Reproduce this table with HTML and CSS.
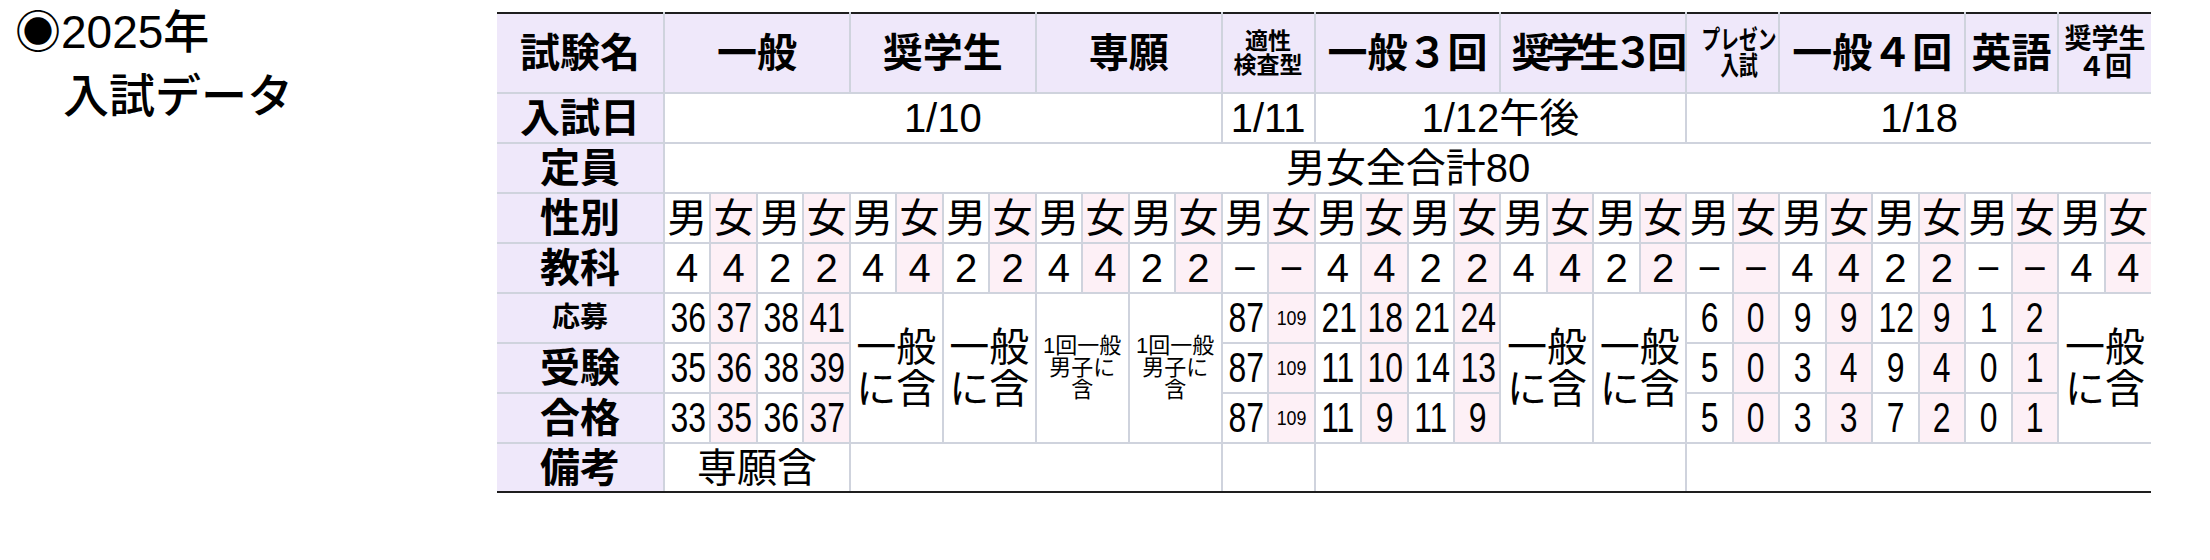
FILE: index.html
```html
<!DOCTYPE html>
<html lang="ja">
<head>
<meta charset="utf-8">
<title>2025年 入試データ</title>
<link rel="stylesheet" href="styles.css">
</head>
<body>
<div class="page">
  <div class="title">
    <div>◉2025年</div>
    <div class="line2">入試データ</div>
  </div>
  <table class="exam">
    <colgroup>
      <col class="c-label">
      <col><col><col><col><col><col><col><col>
      <col><col><col><col><col><col><col><col>
      <col><col><col><col><col><col><col><col>
      <col><col><col><col><col><col><col><col>
    </colgroup>
    <tr class="r-head">
      <th class="lbl">試験名</th>
      <th colspan="4">一般</th>
      <th colspan="4">奨学生</th>
      <th colspan="4">専願</th>
      <th colspan="2" class="h-sm">適性<br>検査型</th>
      <th colspan="4">一般３回</th>
      <th colspan="4" class="h-tight">奨学生３回</th>
      <th colspan="2" class="h-pres"><span class="cond">プレゼン<br>入試</span></th>
      <th colspan="4">一般４回</th>
      <th colspan="2">英語</th>
      <th colspan="2" class="h-mid">奨学生<br>４回</th>
    </tr>
    <tr>
      <th class="lbl">入試日</th>
      <td colspan="12">1/10</td>
      <td colspan="2">1/11</td>
      <td colspan="8">1/12午後</td>
      <td colspan="10">1/18</td>
    </tr>
    <tr>
      <th class="lbl">定員</th>
      <td colspan="32">男女全合計80</td>
    </tr>
    <tr>
      <th class="lbl">性別</th>
      <td>男</td><td class="f">女</td><td>男</td><td class="f">女</td>
      <td>男</td><td class="f">女</td><td>男</td><td class="f">女</td>
      <td>男</td><td class="f">女</td><td>男</td><td class="f">女</td>
      <td>男</td><td class="f">女</td>
      <td>男</td><td class="f">女</td><td>男</td><td class="f">女</td>
      <td>男</td><td class="f">女</td><td>男</td><td class="f">女</td>
      <td>男</td><td class="f">女</td>
      <td>男</td><td class="f">女</td><td>男</td><td class="f">女</td>
      <td>男</td><td class="f">女</td>
      <td>男</td><td class="f">女</td>
    </tr>
    <tr>
      <th class="lbl">教科</th>
      <td>4</td><td class="f">4</td><td>2</td><td class="f">2</td>
      <td>4</td><td class="f">4</td><td>2</td><td class="f">2</td>
      <td>4</td><td class="f">4</td><td>2</td><td class="f">2</td>
      <td>−</td><td class="f">−</td>
      <td>4</td><td class="f">4</td><td>2</td><td class="f">2</td>
      <td>4</td><td class="f">4</td><td>2</td><td class="f">2</td>
      <td>−</td><td class="f">−</td>
      <td>4</td><td class="f">4</td><td>2</td><td class="f">2</td>
      <td>−</td><td class="f">−</td>
      <td>4</td><td class="f">4</td>
    </tr>
    <tr class="r-num">
      <th class="lbl l-sm">応募</th>
      <td><span class="n">36</span></td><td class="f"><span class="n">37</span></td><td><span class="n">38</span></td><td class="f"><span class="n">41</span></td>
      <td colspan="2" rowspan="3" class="incl">一般<br>に含</td>
      <td colspan="2" rowspan="3" class="incl">一般<br>に含</td>
      <td colspan="2" rowspan="3" class="note">1回一般<br>男子に<br>含</td>
      <td colspan="2" rowspan="3" class="note">1回一般<br>男子に<br>含</td>
      <td><span class="n">87</span></td><td class="f n-sm"><span class="n">109</span></td>
      <td><span class="n">21</span></td><td class="f"><span class="n">18</span></td><td><span class="n">21</span></td><td class="f"><span class="n">24</span></td>
      <td colspan="2" rowspan="3" class="incl">一般<br>に含</td>
      <td colspan="2" rowspan="3" class="incl">一般<br>に含</td>
      <td><span class="n">6</span></td><td class="f"><span class="n">0</span></td>
      <td><span class="n">9</span></td><td class="f"><span class="n">9</span></td><td><span class="n">12</span></td><td class="f"><span class="n">9</span></td>
      <td><span class="n">1</span></td><td class="f"><span class="n">2</span></td>
      <td colspan="2" rowspan="3" class="incl">一般<br>に含</td>
    </tr>
    <tr class="r-num">
      <th class="lbl">受験</th>
      <td><span class="n">35</span></td><td class="f"><span class="n">36</span></td><td><span class="n">38</span></td><td class="f"><span class="n">39</span></td>
      <td><span class="n">87</span></td><td class="f n-sm"><span class="n">109</span></td>
      <td><span class="n">11</span></td><td class="f"><span class="n">10</span></td><td><span class="n">14</span></td><td class="f"><span class="n">13</span></td>
      <td><span class="n">5</span></td><td class="f"><span class="n">0</span></td>
      <td><span class="n">3</span></td><td class="f"><span class="n">4</span></td><td><span class="n">9</span></td><td class="f"><span class="n">4</span></td>
      <td><span class="n">0</span></td><td class="f"><span class="n">1</span></td>
    </tr>
    <tr class="r-num">
      <th class="lbl">合格</th>
      <td><span class="n">33</span></td><td class="f"><span class="n">35</span></td><td><span class="n">36</span></td><td class="f"><span class="n">37</span></td>
      <td><span class="n">87</span></td><td class="f n-sm"><span class="n">109</span></td>
      <td><span class="n">11</span></td><td class="f"><span class="n">9</span></td><td><span class="n">11</span></td><td class="f"><span class="n">9</span></td>
      <td><span class="n">5</span></td><td class="f"><span class="n">0</span></td>
      <td><span class="n">3</span></td><td class="f"><span class="n">3</span></td><td><span class="n">7</span></td><td class="f"><span class="n">2</span></td>
      <td><span class="n">0</span></td><td class="f"><span class="n">1</span></td>
    </tr>
    <tr class="r-last">
      <th class="lbl">備考</th>
      <td colspan="4">専願含</td>
      <td colspan="8"></td>
      <td colspan="2"></td>
      <td colspan="8"></td>
      <td colspan="10"></td>
    </tr>
  </table>
</div>
</body>
</html>
```
FILE: styles.css
```css
body {
  margin: 0;
  background: #ffffff;
  color: #000000;
  font-family: "Liberation Sans", "Noto Sans CJK JP", sans-serif;
}

.page {
  display: flex;
  align-items: flex-start;
}

.title {
  flex: none;
  width: 497px;
  padding-left: 15px;
  box-sizing: border-box;
  font-size: 46px;
  line-height: 64px;
  font-weight: 500;
}

.title .line2 {
  padding-left: 48px;
}

.exam {
  flex: none;
  margin-top: 12px;
  width: 1654px;
  table-layout: fixed;
  border-collapse: collapse;
  border-left: hidden;
  border-right: hidden;
}

.exam col.c-label {
  width: 167px;
}

.exam th,
.exam td {
  border: 2px solid #cfd3dd;
  padding: 0;
  height: 48px;
  text-align: center;
  vertical-align: middle;
  font-size: 40px;
  line-height: 44px;
  font-weight: 400;
  white-space: nowrap;
  overflow: hidden;
}

.exam .lbl {
  background: #efe8fa;
  font-weight: 700;
}

.exam .r-head th {
  background: #efe8fa;
  font-weight: 700;
  height: 78px;
  border-top: 2px solid #1e1e1e;
}

.exam .r-last th,
.exam .r-last td {
  border-bottom: 2px solid #1e1e1e;
  height: 47px;
}

.exam .r-num td {
  font-size: 42px;
}

.exam .n {
  display: inline-block;
  transform: scaleX(0.76);
}

.exam .f {
  background: #fdf0f6;
}

.exam .h-sm {
  font-size: 23px;
  line-height: 24px;
}

.exam .h-tight {
  letter-spacing: -6px;
  text-indent: 6px;
}

.exam .h-pres {
  font-size: 26px;
  line-height: 26px;
}

.exam .cond {
  display: inline-block;
  transform: scaleX(0.72);
}

.exam .h-mid {
  font-size: 27px;
  line-height: 28px;
}

.exam .l-sm {
  font-size: 28px;
}

.exam .r-num .n-sm {
  font-size: 21px;
}

.exam .r-num .n-sm .n {
  transform: scaleX(0.85);
}

.exam .r-num .incl {
  background: #ffffff;
  font-size: 40px;
  line-height: 42px;
}

.exam .r-num .note {
  background: #ffffff;
  font-size: 22px;
  line-height: 22px;
}
```
